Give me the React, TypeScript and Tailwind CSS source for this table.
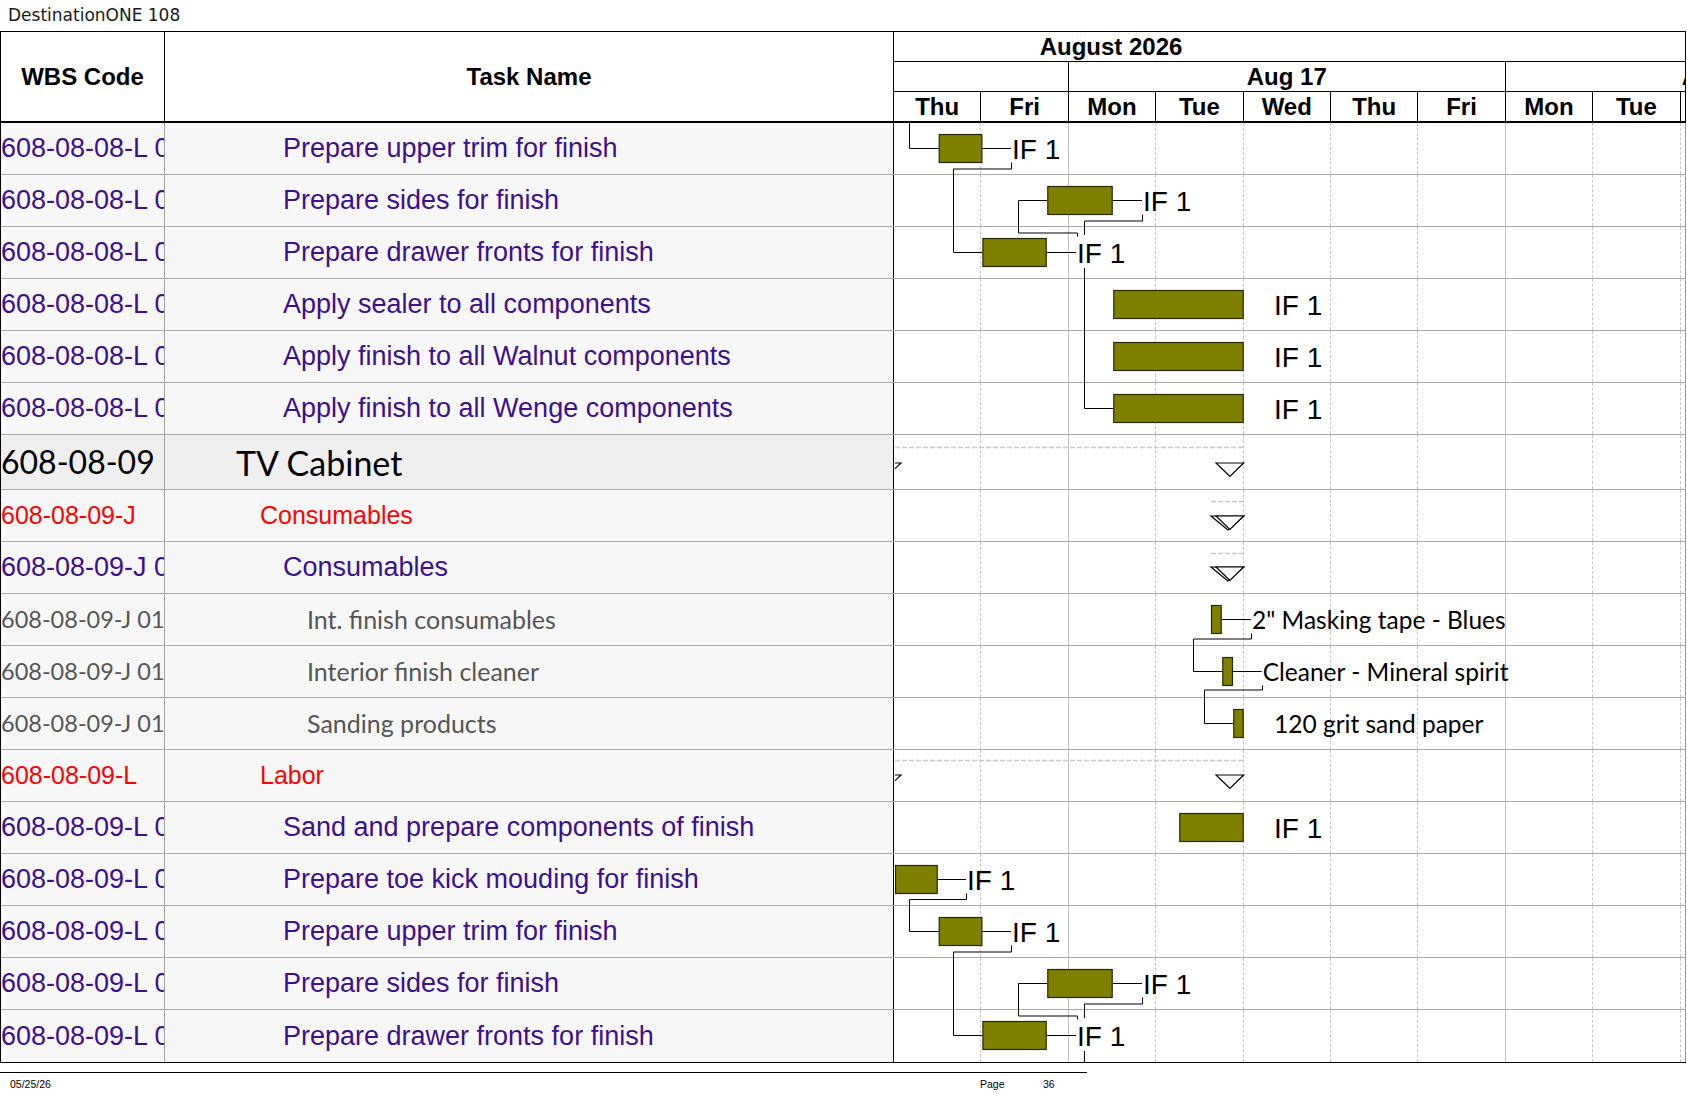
import React from "react";

type Kind = "task" | "group" | "top" | "item";

type Row = { wbs: string; task: string; kind: Kind };

const rows: Row[] = [
  { wbs: "608-08-08-L 01 01", task: "Prepare upper trim for finish", kind: "task" },
  { wbs: "608-08-08-L 01 02", task: "Prepare sides for finish", kind: "task" },
  { wbs: "608-08-08-L 01 03", task: "Prepare drawer fronts for finish", kind: "task" },
  { wbs: "608-08-08-L 01 04", task: "Apply sealer to all components", kind: "task" },
  { wbs: "608-08-08-L 01 05", task: "Apply finish to all Walnut components", kind: "task" },
  { wbs: "608-08-08-L 01 06", task: "Apply finish to all Wenge components", kind: "task" },
  { wbs: "608-08-09", task: "TV Cabinet", kind: "top" },
  { wbs: "608-08-09-J", task: "Consumables", kind: "group" },
  { wbs: "608-08-09-J 01", task: "Consumables", kind: "task" },
  { wbs: "608-08-09-J 01 01", task: "Int. finish consumables", kind: "item" },
  { wbs: "608-08-09-J 01 02", task: "Interior finish cleaner", kind: "item" },
  { wbs: "608-08-09-J 01 03", task: "Sanding products", kind: "item" },
  { wbs: "608-08-09-L", task: "Labor", kind: "group" },
  { wbs: "608-08-09-L 01 01", task: "Sand and prepare components of finish", kind: "task" },
  { wbs: "608-08-09-L 01 02", task: "Prepare toe kick mouding for finish", kind: "task" },
  { wbs: "608-08-09-L 01 03", task: "Prepare upper trim for finish", kind: "task" },
  { wbs: "608-08-09-L 01 04", task: "Prepare sides for finish", kind: "task" },
  { wbs: "608-08-09-L 01 05", task: "Prepare drawer fronts for finish", kind: "task" },
];

const wbsStyle: Record<Kind, string> = {
  task: "font-['Liberation_Sans',Arial,sans-serif] text-[27px] text-[#400f8a]",
  group: "font-['Liberation_Sans',Arial,sans-serif] text-[25px] text-[#ff0000]",
  top: "font-['Lato',sans-serif] text-[32px] text-black",
  item: "font-['Lato',sans-serif] text-[23.5px] text-[#555555]",
};

const taskStyle: Record<Kind, string> = {
  task: "pl-[118px] font-['Liberation_Sans',Arial,sans-serif] text-[27px] text-[#400f8a]",
  group: "pl-[95px] font-['Liberation_Sans',Arial,sans-serif] text-[25px] text-[#ff0000]",
  top: "pl-[71px] font-['Lato',sans-serif] text-[34px] text-black",
  item: "pl-[142px] font-['Lato',sans-serif] text-[25px] text-[#555555]",
};

// row tops inside the chart body (px)
const heights = rows.map((r) => (r.kind === "top" ? 55 : 52));
const tops: number[] = [];
heights.reduce((acc, h) => {
  tops.push(acc);
  return acc + h;
}, 0);
const bodyH = heights.reduce((a, b) => a + b, 0);
const cy = (i: number) => tops[i] + 25.5;

const days = ["Thu", "Fri", "Mon", "Tue", "Wed", "Thu", "Fri", "Mon", "Tue", ""];

const bars = [
  { r: 0, x1: 43.7, x2: 87.4 },
  { r: 1, x1: 152.3, x2: 217.7 },
  { r: 2, x1: 87.4, x2: 151.7 },
  { r: 3, x1: 218.3, x2: 348.7 },
  { r: 4, x1: 218.3, x2: 348.7 },
  { r: 5, x1: 218.3, x2: 348.7 },
  { r: 9, x1: 316, x2: 326.7 },
  { r: 10, x1: 327.3, x2: 338 },
  { r: 11, x1: 338.3, x2: 348.7 },
  { r: 13, x1: 284.3, x2: 348.7 },
  { r: 14, x1: 0, x2: 42.7 },
  { r: 15, x1: 43.7, x2: 87.4 },
  { r: 16, x1: 152.3, x2: 217.7 },
  { r: 17, x1: 87.4, x2: 151.7 },
];

const labels = [
  { r: 0, x: 117, text: "IF 1", from: 87.4, res: false },
  { r: 1, x: 248, text: "IF 1", from: 217.7, res: false },
  { r: 2, x: 182, text: "IF 1", from: 151.7, res: false },
  { r: 3, x: 379, text: "IF 1", from: 0, res: false },
  { r: 4, x: 379, text: "IF 1", from: 0, res: false },
  { r: 5, x: 379, text: "IF 1", from: 0, res: false },
  { r: 9, x: 357, text: '2" Masking tape - Blues', from: 326.7, res: true },
  { r: 10, x: 367.7, text: "Cleaner - Mineral spirit", from: 338, res: true },
  { r: 11, x: 379, text: "120 grit sand paper", from: 0, res: true },
  { r: 13, x: 379, text: "IF 1", from: 0, res: false },
  { r: 14, x: 72, text: "IF 1", from: 42.7, res: false },
  { r: 15, x: 117, text: "IF 1", from: 87.4, res: false },
  { r: 16, x: 248, text: "IF 1", from: 217.7, res: false },
  { r: 17, x: 182, text: "IF 1", from: 151.7, res: false },
];

function pts(p: number[][]) {
  return p.map(([x, y]) => `${x},${y}`).join(" ");
}

function links() {
  const l: number[][][] = [];
  l.push([[14.5, 0], [14.5, cy(0)], [43.7, cy(0)]]);
  // finish of upper trim -> drawer fronts
  for (const [a, b] of [[0, 2], [15, 17]]) {
    l.push([[116.5, cy(a) + 14], [116.5, cy(a) + 20.5], [58.5, cy(a) + 20.5], [58.5, cy(b)], [87.4, cy(b)]]);
  }
  // into sides
  for (const a of [1, 16]) {
    l.push([[152.3, cy(a)], [123.5, cy(a)], [123.5, cy(a) + 32.5], [182.5, cy(a) + 32.5], [182.5, cy(a) + 36]]);
    l.push([[247.5, cy(a) + 14], [247.5, cy(a) + 20.5], [189.5, cy(a) + 20.5], [189.5, cy(a + 1) - 17.5]]);
  }
  l.push([[189.5, cy(2) + 15.5], [189.5, cy(5)], [218.3, cy(5)]]);
  l.push([[189.5, cy(17) + 15.5], [189.5, bodyH]]);
  l.push([[356.5, cy(9) + 14], [356.5, cy(9) + 19.5], [298.5, cy(9) + 19.5], [298.5, cy(10)], [327.3, cy(10)]]);
  l.push([[367.5, cy(10) + 14], [367.5, cy(10) + 18.5], [309.5, cy(10) + 18.5], [309.5, cy(11)], [338.3, cy(11)]]);
  l.push([[71.5, cy(14) + 14], [71.5, cy(14) + 20], [14.5, cy(14) + 20], [14.5, cy(15)], [43.7, cy(15)]]);
  return l;
}

function Triangle({ x1, x2, top, double }: { x1: number; x2: number; top: number; double?: boolean }) {
  const apex = (x1 + x2) / 2;
  return (
    <g fill="white" stroke="black" strokeWidth={1.2}>
      {double && <polygon points={pts([[x1 - 5, top], [x2, top], [apex - 2, top + 14]])} />}
      <polygon points={pts([[x1, top], [x2, top], [apex, top + 13.5]])} />
    </g>
  );
}

function GanttDrawing() {
  return (
    <svg width={792} height={bodyH} className="absolute left-[894px] top-0 overflow-hidden">
      {/* summary rows */}
      <g stroke="#c8c8c8" strokeWidth={1.5} strokeDasharray="5 2">
        <line x1={0} y1={tops[6] + 12.5} x2={349} y2={tops[6] + 12.5} />
        <line x1={316} y1={tops[7] + 11.5} x2={349} y2={tops[7] + 11.5} />
        <line x1={316} y1={tops[8] + 11.5} x2={349} y2={tops[8] + 11.5} />
        <line x1={0} y1={tops[12] + 10.5} x2={349} y2={tops[12] + 10.5} />
      </g>
      <Triangle x1={-22} x2={6} top={tops[6] + 28} />
      <Triangle x1={321} x2={348.7} top={tops[6] + 28} />
      <Triangle x1={321} x2={348.7} top={tops[7] + 26} double />
      <Triangle x1={321} x2={348.7} top={tops[8] + 25} double />
      <Triangle x1={-22} x2={6} top={tops[12] + 25} />
      <Triangle x1={321} x2={348.7} top={tops[12] + 25} />

      {/* links */}
      <g fill="none" stroke="black" strokeWidth={1}>
        {links().map((p, i) => (
          <polyline key={i} points={pts(p)} />
        ))}
        {labels
          .filter((l) => l.from > 0)
          .map((l, i) => (
            <line key={i} x1={l.from} y1={cy(l.r)} x2={l.x - 1} y2={cy(l.r)} />
          ))}
      </g>

      {bars.map((b, i) => (
        <rect
          key={i}
          x={b.x1 + 0.5}
          y={cy(b.r) - 14}
          width={b.x2 - b.x1 - 1}
          height={28}
          fill="#808000"
          stroke="#262600"
          strokeWidth={1.2}
        />
      ))}

      {labels.map((l, i) =>
        l.res ? (
          <text key={i} x={l.x} y={cy(l.r) + 9} className="fill-black font-['Lato',sans-serif] text-[24.5px]">
            {l.text}
          </text>
        ) : (
          <text
            key={i}
            x={l.x}
            y={cy(l.r) + 10}
            className="fill-black font-['Liberation_Sans',Arial,sans-serif] text-[28px]"
          >
            {l.text}
          </text>
        )
      )}
    </svg>
  );
}

function ChartCells() {
  return (
    <div className="grid h-full flex-1 grid-cols-[repeat(9,87.4px)_1fr] border-r border-[#9a9a9a] bg-white">
      {days.map((_, i) => (
        <div
          key={i}
          className={
            i === 9
              ? ""
              : i === 1 || i === 6
              ? "border-r border-solid border-[#c2c2c2]"
              : "border-r border-dashed border-[#c8c8c8]"
          }
        />
      ))}
    </div>
  );
}

export default function App() {
  return (
    <div className="relative h-[1097px] w-[1687px] overflow-hidden bg-white font-['Liberation_Sans',Arial,sans-serif]">
      <div className="flex h-[31px] items-center pl-[8px] font-['DejaVu_Sans',sans-serif] text-[17px] text-[#1a1a1a]">
        DestinationONE 108
      </div>

      <div className="w-[1686px] border-t border-l border-b border-black">
        {/* header */}
        <div className="flex h-[91px]">
          <div className="flex w-[164px] items-center justify-center border-r border-b-2 border-black text-[24px] font-bold">
            WBS Code
          </div>
          <div className="flex w-[729px] items-center justify-center border-r border-b-2 border-black text-[24px] font-bold">
            Task Name
          </div>
          <div className="flex flex-1 flex-col overflow-hidden border-r border-b-2 border-black text-[24px] font-bold leading-none">
            <div className="flex h-[30px] border-b border-black">
              <div className="flex w-[434px] items-center justify-center">August 2026</div>
            </div>
            <div className="grid h-[30px] grid-cols-[174.8px_437px_1fr] border-b border-black">
              <div className="border-r border-black" />
              <div className="flex items-center justify-center border-r border-black">Aug 17</div>
              <div className="flex items-center whitespace-nowrap pl-[176px]">Aug 24</div>
            </div>
            <div className="grid h-[29px] grid-cols-[repeat(9,87.4px)_1fr]">
              {days.map((d, i) => (
                <div key={i} className={`flex items-center justify-center ${i === 9 ? "" : "border-r border-black"}`}>
                  {d}
                </div>
              ))}
            </div>
          </div>
        </div>

        {/* body */}
        <div className="relative">
          {rows.map((r, i) => {
            const last = i === rows.length - 1;
            const bg = r.kind === "top" ? "bg-[#efefef]" : "bg-[#f7f7f7]";
            return (
              <div
                key={i}
                className={`flex ${r.kind === "top" ? "h-[55px]" : "h-[52px]"} ${last ? "" : "border-b border-[#a9a9a9]"}`}
              >
                <div
                  className={`flex w-[164px] items-center overflow-hidden whitespace-nowrap border-r border-[#a0a0a0] ${bg} ${wbsStyle[r.kind]}`}
                >
                  {r.wbs}
                </div>
                <div
                  className={`flex w-[729px] items-center overflow-hidden whitespace-nowrap border-r border-black ${bg} ${taskStyle[r.kind]}`}
                >
                  {r.task}
                </div>
                <ChartCells />
              </div>
            );
          })}
          <GanttDrawing />
        </div>
      </div>

      {/* footer */}
      <div className="mt-[9px] w-[1087px] border-t border-black" />
      <div className="flex pt-[6px] text-[10.5px] leading-none text-black">
        <span className="w-[980px] pl-[10px]">05/25/26</span>
        <span className="w-[63px]">Page</span>
        <span>36</span>
      </div>
    </div>
  );
}
